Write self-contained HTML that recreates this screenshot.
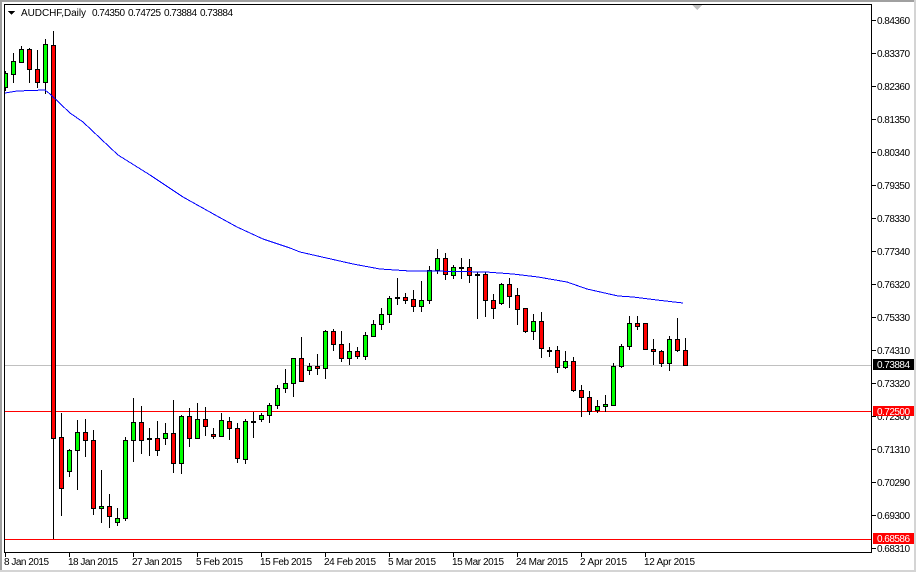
<!DOCTYPE html>
<html><head><meta charset="utf-8"><style>
html,body{margin:0;padding:0;background:#fff;width:916px;height:572px;overflow:hidden}
svg{display:block}
text{font-family:"Liberation Sans",sans-serif;font-size:10px;fill:#000}
</style></head><body>
<svg width="916" height="572" viewBox="0 0 916 572" xmlns="http://www.w3.org/2000/svg">
<rect width="916" height="572" fill="#fff"/>
<g shape-rendering="crispEdges">
<rect x="0" y="0" width="916" height="2" fill="#a0a0a0"/>
<rect x="0" y="0" width="2" height="572" fill="#a0a0a0"/>
<rect x="0" y="570" width="916" height="2" fill="#d4d4d4"/>
<rect x="914" y="0" width="2" height="572" fill="#d4d4d4"/>
<rect x="5" y="365" width="866" height="1" fill="#c0c0c0"/>
<rect x="5" y="411" width="866" height="1" fill="#ff0000"/>
<rect x="5" y="539" width="866" height="1" fill="#ff0000"/>
<path fill="none" stroke="#000" d="M5.5 71V91M13.5 53V83M21.5 46V63M29.5 48V83M37.5 50V88M45.5 39V94M53.5 31V539M61.5 413V516M69.5 449V477M77.5 420V490M85.5 419V457M93.5 430V515M101.5 470V523M109.5 494V528M117.5 508V526M125.5 437V521M133.5 398V462M141.5 406V454M149.5 428V456M157.5 421V456M165.5 423V445M173.5 400V473M181.5 415V474M189.5 408V447M197.5 403V438M205.5 407V436M213.5 428V439M221.5 413V437M229.5 417V440M237.5 423V463M245.5 419V464M253.5 412V438M261.5 413V422M269.5 403V423M277.5 385V409M285.5 369V393M293.5 358V397M301.5 337V381M309.5 363V375M317.5 354V375M325.5 330V379M333.5 329V351M341.5 331V362M349.5 343V365M357.5 347V359M365.5 332V360M373.5 320V337M381.5 308V330M389.5 296V323M397.5 278V305M405.5 293V304M413.5 290V312M421.5 281V312M429.5 266V304M437.5 249V274M445.5 253V280M453.5 265V279M461.5 258V279M469.5 259V283M477.5 272V319M485.5 272V317M493.5 294V319M501.5 283V305M509.5 278V308M517.5 288V325M525.5 308V333M533.5 314V340M541.5 312V358M549.5 347V357M557.5 346V373M565.5 351V369M573.5 357V392M581.5 385V417M589.5 391V415M597.5 400V413M605.5 395V412M613.5 363V406M621.5 344V368M629.5 316V350M637.5 316V330M645.5 323V349M653.5 339V365M661.5 350V367M669.5 336V371M677.5 318V352M685.5 338V365"/>
<path fill="#00ff00" stroke="#000" d="M3.5 73.5h4V87.5h-4zM11.5 61.5h4V74.5h-4zM19.5 49.5h4V62.5h-4zM43.5 44.5h4V82.5h-4zM67.5 450.5h4V471.5h-4zM75.5 432.5h4V450.5h-4zM99.5 506.5h4V508.5h-4zM115.5 518.5h4V522.5h-4zM123.5 440.5h4V518.5h-4zM131.5 422.5h4V440.5h-4zM163.5 433.5h4V438.5h-4zM179.5 416.5h4V463.5h-4zM195.5 419.5h4V438.5h-4zM219.5 420.5h4V436.5h-4zM243.5 421.5h4V459.5h-4zM259.5 415.5h4V419.5h-4zM267.5 405.5h4V415.5h-4zM275.5 388.5h4V405.5h-4zM283.5 383.5h4V388.5h-4zM291.5 358.5h4V383.5h-4zM307.5 366.5h4V370.5h-4zM323.5 331.5h4V368.5h-4zM347.5 351.5h4V358.5h-4zM363.5 335.5h4V356.5h-4zM371.5 324.5h4V336.5h-4zM379.5 314.5h4V324.5h-4zM387.5 298.5h4V314.5h-4zM419.5 300.5h4V306.5h-4zM427.5 270.5h4V300.5h-4zM435.5 258.5h4V270.5h-4zM451.5 267.5h4V275.5h-4zM499.5 284.5h4V303.5h-4zM531.5 321.5h4V331.5h-4zM563.5 361.5h4V367.5h-4zM595.5 406.5h4V410.5h-4zM603.5 404.5h4V406.5h-4zM611.5 366.5h4V405.5h-4zM619.5 346.5h4V366.5h-4zM627.5 323.5h4V346.5h-4zM667.5 339.5h4V363.5h-4z"/>
<path fill="#ff0000" stroke="#000" d="M27.5 49.5h4V69.5h-4zM35.5 69.5h4V82.5h-4zM51.5 45.5h4V438.5h-4zM59.5 437.5h4V488.5h-4zM83.5 432.5h4V440.5h-4zM91.5 440.5h4V508.5h-4zM107.5 506.5h4V516.5h-4zM139.5 422.5h4V440.5h-4zM155.5 438.5h4V450.5h-4zM171.5 433.5h4V463.5h-4zM187.5 416.5h4V438.5h-4zM203.5 419.5h4V426.5h-4zM211.5 434.5h4V436.5h-4zM227.5 421.5h4V428.5h-4zM235.5 428.5h4V458.5h-4zM299.5 358.5h4V381.5h-4zM315.5 366.5h4V368.5h-4zM331.5 331.5h4V344.5h-4zM339.5 344.5h4V358.5h-4zM355.5 351.5h4V356.5h-4zM403.5 297.5h4V300.5h-4zM411.5 299.5h4V306.5h-4zM443.5 258.5h4V274.5h-4zM467.5 267.5h4V275.5h-4zM483.5 274.5h4V300.5h-4zM491.5 300.5h4V308.5h-4zM507.5 284.5h4V296.5h-4zM515.5 295.5h4V309.5h-4zM523.5 308.5h4V331.5h-4zM539.5 321.5h4V348.5h-4zM555.5 350.5h4V367.5h-4zM571.5 361.5h4V390.5h-4zM579.5 390.5h4V397.5h-4zM587.5 397.5h4V411.5h-4zM635.5 323.5h4V326.5h-4zM643.5 323.5h4V349.5h-4zM651.5 349.5h4V351.5h-4zM659.5 351.5h4V363.5h-4zM675.5 339.5h4V350.5h-4zM683.5 350.5h4V365.5h-4z"/>
<path fill="#000" d="M147 438h5v2h-5zM251 421h5v2h-5zM395 297h5v2h-5zM459 267h5v2h-5zM475 274h5v2h-5zM547 350h5v2h-5z"/>
<polyline fill="none" stroke="#0000ff" points="5,93 17,91 45,90 50,94 70,113 83,122 118,155 150,175 183,197 217,216 237,227 263,239 290,248 300,252 353,264 380,269 410,271 430,271 486,272 513,274 538,277 567,282 587,289 618,296 633,297 657,300 683,303"/>
<rect x="2" y="2" width="3" height="568" fill="#fff"/>
<rect x="2" y="2" width="912" height="2" fill="#fff"/>
<rect x="4" y="4" width="868" height="1" fill="#000"/>
<rect x="4" y="4" width="1" height="549" fill="#000"/>
<rect x="871" y="4" width="1" height="549" fill="#000"/>
<rect x="4" y="552" width="868" height="1" fill="#000"/>
<path fill="#000" d="M872 20h4v1h-4zM872 53h4v1h-4zM872 86h4v1h-4zM872 119h4v1h-4zM872 152h4v1h-4zM872 185h4v1h-4zM872 218h4v1h-4zM872 251h4v1h-4zM872 284h4v1h-4zM872 317h4v1h-4zM872 350h4v1h-4zM872 383h4v1h-4zM872 416h4v1h-4zM872 449h4v1h-4zM872 482h4v1h-4zM872 515h4v1h-4zM872 548h4v1h-4z"/>
<path fill="#000" d="M5 553h1v4h-1zM69 553h1v4h-1zM133 553h1v4h-1zM197 553h1v4h-1zM261 553h1v4h-1zM325 553h1v4h-1zM389 553h1v4h-1zM453 553h1v4h-1zM517 553h1v4h-1zM581 553h1v4h-1zM645 553h1v4h-1z"/>
<path fill="#000" d="M8 11h7l-3.5 4z"/>
<path fill="#c0c0c0" d="M692 5h10l-5 5z"/>
</g>
<text x="21" y="16" textLength="65" lengthAdjust="spacing">AUDCHF,Daily</text>
<text x="92" y="16" textLength="33">0.74350</text>
<text x="128" y="16" textLength="33">0.74725</text>
<text x="164" y="16" textLength="33">0.73884</text>
<text x="200" y="16" textLength="33">0.73884</text>
<text x="877" y="24" textLength="33">0.84360</text>
<text x="877" y="57" textLength="33">0.83370</text>
<text x="877" y="90" textLength="33">0.82360</text>
<text x="877" y="123" textLength="33">0.81350</text>
<text x="877" y="156" textLength="33">0.80340</text>
<text x="877" y="189" textLength="33">0.79350</text>
<text x="877" y="222" textLength="33">0.78330</text>
<text x="877" y="255" textLength="33">0.77340</text>
<text x="877" y="288" textLength="33">0.76320</text>
<text x="877" y="321" textLength="33">0.75330</text>
<text x="877" y="354" textLength="33">0.74310</text>
<text x="877" y="387" textLength="33">0.73320</text>
<text x="877" y="420" textLength="33">0.72300</text>
<text x="877" y="453" textLength="33">0.71310</text>
<text x="877" y="486" textLength="33">0.70290</text>
<text x="877" y="519" textLength="33">0.69300</text>
<text x="877" y="552" textLength="33">0.68310</text>
<rect x="873" y="359" width="41" height="11" fill="#000" shape-rendering="crispEdges"/>
<text x="877" y="368" textLength="33" style="fill:#fff">0.73884</text>
<rect x="873" y="406" width="41" height="10" fill="#ff0000" shape-rendering="crispEdges"/>
<text x="877" y="415" textLength="33" style="fill:#fff">0.72500</text>
<rect x="873" y="533" width="41" height="11" fill="#ff0000" shape-rendering="crispEdges"/>
<text x="877" y="542" textLength="33" style="fill:#fff">0.68586</text>
<text x="4" y="565" textLength="45">8 Jan 2015</text>
<text x="68" y="565" textLength="50">18 Jan 2015</text>
<text x="132" y="565" textLength="50">27 Jan 2015</text>
<text x="196" y="565" textLength="47">5 Feb 2015</text>
<text x="260" y="565" textLength="52">15 Feb 2015</text>
<text x="324" y="565" textLength="52">24 Feb 2015</text>
<text x="388" y="565" textLength="48">5 Mar 2015</text>
<text x="452" y="565" textLength="52">15 Mar 2015</text>
<text x="516" y="565" textLength="52">24 Mar 2015</text>
<text x="580" y="565" textLength="47">2 Apr 2015</text>
<text x="644" y="565" textLength="51">12 Apr 2015</text>
</svg>
</body></html>
